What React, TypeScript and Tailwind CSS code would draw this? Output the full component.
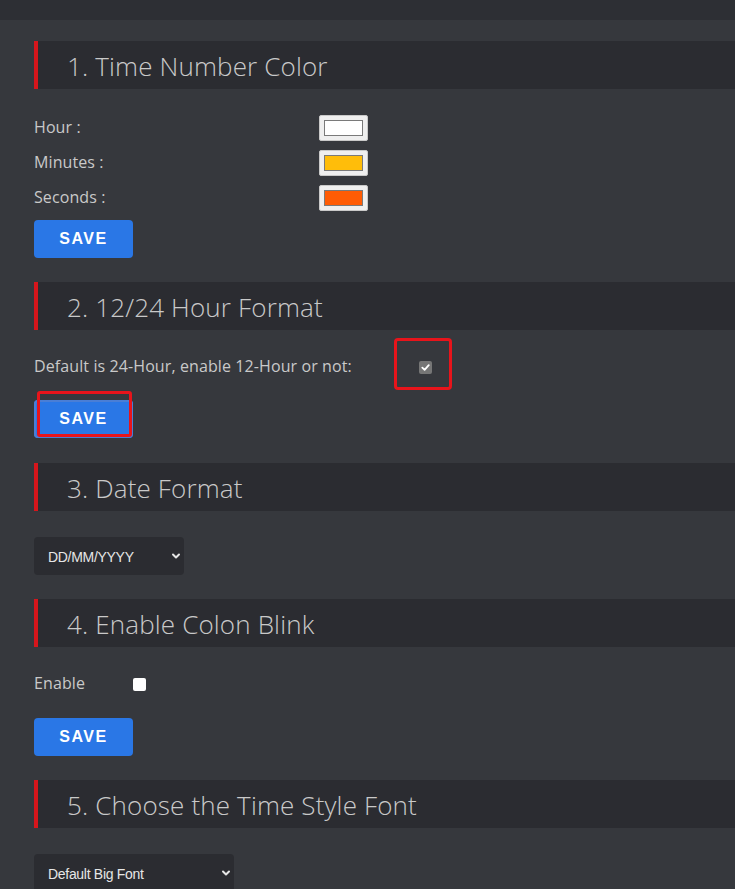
import { ReactNode } from "react";

function Heading({ children }: { children: ReactNode }) {
  return (
    <div className="h-12 bg-[#2b2c31] border-l-4 border-[#d6161c] flex items-center pl-[29px]">
      <h2 className="text-[26px] font-light text-[#c9c9c9] tracking-[0.15px] leading-none pt-[2px]">
        {children}
      </h2>
    </div>
  );
}

function SaveButton({ focused }: { focused?: boolean }) {
  return (
    <div className="relative w-[99px]">
      <button
        className={
          "w-[99px] h-[38px] rounded bg-[#2a77e6] text-white font-bold text-[16px] tracking-[1.5px] font-['Liberation_Sans',Arial,sans-serif] " +
          (focused ? "ring-2 ring-[#4a7ed6] ring-inset" : "")
        }
      >
        SAVE
      </button>
      {focused && (
        <div className="absolute left-[3px] top-[-9px] w-[95px] h-[46px] border-[3px] border-[#e8141b] rounded-[3px]" />
      )}
    </div>
  );
}

function Swatch({ color }: { color: string }) {
  return (
    <div className="w-[49px] h-[26px] bg-[#efefef] rounded-[2px] border border-[#c9c9c9] flex items-center justify-center">
      <div className="w-[39px] h-[16px] border border-[#7a7a7a]" style={{ background: color }} />
    </div>
  );
}

function Select({ label, width }: { label: string; width: string }) {
  return (
    <div
      className={
        width +
        " h-[38px] bg-[#2b2c31] rounded flex items-center justify-between pl-[14px] pr-[2px] text-[14px] text-[#e6e6e6] font-['Liberation_Sans',Arial,sans-serif]"
      }
    >
      <span className="tracking-[-0.3px] pt-[2px]">{label}</span>
      <svg width="12" height="12" viewBox="0 0 12 12" fill="none">
        <path d="M3 4.5 L6 7.5 L9 4.5" stroke="#e6e6e6" strokeWidth="2" strokeLinecap="round" strokeLinejoin="round" />
      </svg>
    </div>
  );
}

export default function App() {
  const label = "text-[16px] text-[#c9c9c9] font-['Open_Sans',sans-serif] tracking-[0.1px] -mt-[3px]";
  return (
    <div className="min-h-[889px] bg-[#36383d] font-['Open_Sans',sans-serif] overflow-hidden">
      <div className="h-5 bg-[#2d2f34]" />
      <div className="pl-[34px] pt-[21px] flex flex-col">
        <Heading>1. Time Number Color</Heading>
        <div className="flex flex-col pt-[26px] gap-[9px]">
          {[
            ["Hour :", "#ffffff"],
            ["Minutes :", "#ffbd0a"],
            ["Seconds :", "#ff5c05"],
          ].map(([name, c]) => (
            <div key={name} className="flex items-center h-[26px]">
              <span className={label + " w-[285px]"}>{name}</span>
              <Swatch color={c} />
            </div>
          ))}
        </div>
        <div className="pt-[9px]">
          <SaveButton />
        </div>

        <div className="pt-6">
          <Heading>2. 12/24 Hour Format</Heading>
        </div>
        <div className="flex items-center h-[26px] mt-6">
          <span className={label + " w-[385px]"}>Default is 24-Hour, enable 12-Hour or not:</span>
          <div className="relative">
            <span className="block w-[13px] h-[13px] rounded-[2px] bg-[#767676] flex items-center justify-center">
              <svg width="9" height="9" viewBox="0 0 10 10">
                <path d="M1.5 5.2 L4 7.6 L8.6 2.4" stroke="#fff" strokeWidth="2" fill="none" strokeLinecap="round" strokeLinejoin="round" />
              </svg>
            </span>
            <div className="absolute left-[-25px] top-[-23px] w-[58px] h-[52px] border-[3px] border-[#e8141b] rounded-[4px]" />
          </div>
        </div>
        <div className="pt-[20px]">
          <SaveButton focused />
        </div>

        <div className="pt-[25px]">
          <Heading>3. Date Format</Heading>
        </div>
        <div className="pt-[26px]">
          <Select label="DD/MM/YYYY" width="w-[150px]" />
        </div>

        <div className="pt-6">
          <Heading>4. Enable Colon Blink</Heading>
        </div>
        <div className="flex items-center h-[26px] mt-6">
          <span className={label + " w-[99px]"}>Enable</span>
          <span className="block w-[13px] h-[13px] rounded-[2px] bg-white" />
        </div>
        <div className="pt-[21px]">
          <SaveButton />
        </div>

        <div className="pt-6">
          <Heading>5. Choose the Time Style Font</Heading>
        </div>
        <div className="pt-[26px]">
          <Select label="Default Big Font" width="w-[200px]" />
        </div>
      </div>
    </div>
  );
}
